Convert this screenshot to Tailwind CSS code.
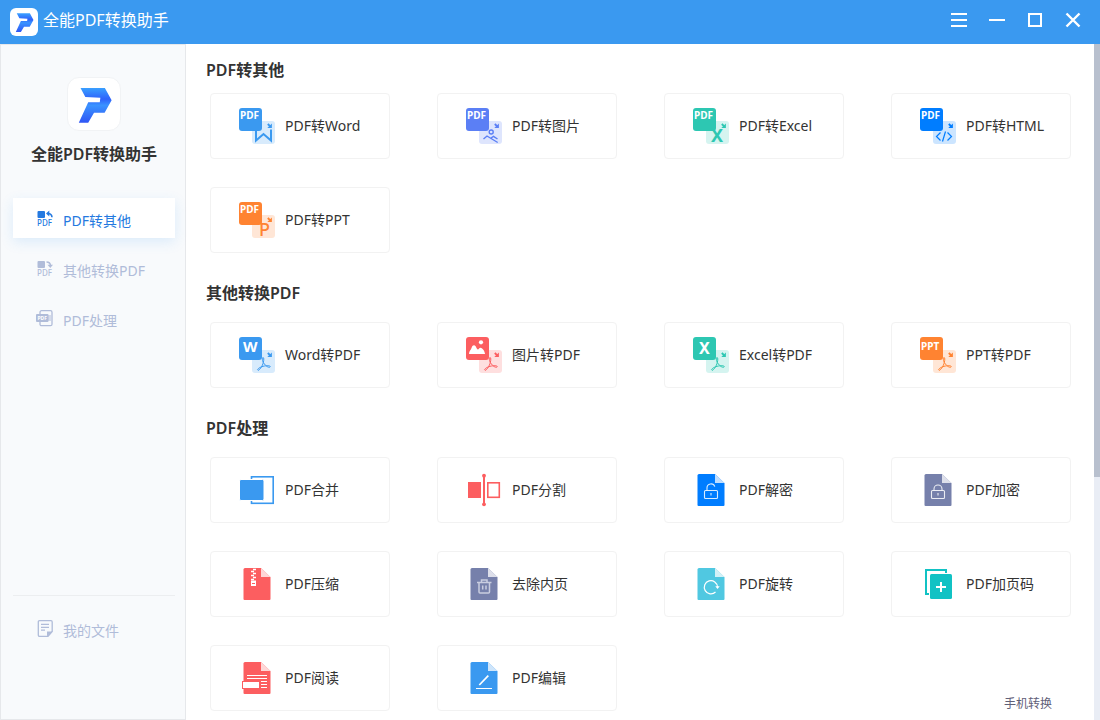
<!DOCTYPE html>
<html lang="zh-CN">
<head>
<meta charset="utf-8">
<meta name="viewport" content="width=device-width, initial-scale=1">
<title>全能PDF转换助手</title>
<script src="https://cdn.jsdelivr.net/npm/@tailwindcss/browser@4"></script>
</head>
<body class="h-screen flex flex-col overflow-hidden bg-white text-[#333] font-['Noto_Sans','Noto_Sans_CJK_SC',sans-serif]">

<!-- Shared icon parts -->
<svg class="absolute size-0" aria-hidden="true">
  <defs>
    <linearGradient id="brand" x1="0" y1="0" x2="0" y2="1">
      <stop offset="0" stop-color="#3aa0ff"/><stop offset=".32" stop-color="#2f62fb"/>
      <stop offset=".5" stop-color="#3a93ff"/><stop offset="1" stop-color="#2f55f5"/>
    </linearGradient>
    <symbol id="logo" viewBox="0 0 54 54">
      <path fill="url(#brand)" d="M13 10.3H38.3L45.3 23 38 36H27L21 46.5H11.2L21 25.3H33L33.6 20.5 18 19.8Z"/>
    </symbol>
    <symbol id="pair" viewBox="0 0 36 36">
      <rect x="13" y="13" width="23" height="23" rx="3" fill="currentColor" opacity=".2"/>
      <path d="M28.800 16l2.500 2.500" stroke="currentColor" stroke-width="1.800"/>
      <path d="M32.900 15.500v4.600h-4.600z" fill="currentColor"/>
      <rect width="23" height="23" rx="3" fill="currentColor"/>
    </symbol>
    <symbol id="acro" viewBox="0 0 36 36">
      <path d="M24.300 25.500C23 22.500 23 20.500 24 20.500C25 20.500 25 22.500 24.300 25.500C23.500 29 20.500 33.500 19 33.300C17.500 32.500 20.500 30.300 24 29.300C27.500 28.500 31.300 28.500 31.300 29.700C31 31 27.500 30.500 24.300 25.500" fill="none" stroke="currentColor" stroke-width="1"/>
    </symbol>
    <symbol id="doc" viewBox="0 0 36 36">
      <path d="M6 2H22L31.500 11V33a1 1 0 0 1-1 1H5.500a1 1 0 0 1-1-1V3.500A1.500 1.500 0 0 1 6 2Z" fill="currentColor"/>
      <path d="M22 1.500H32V11Z" fill="#fff"/>
      <path d="M22 2L31.500 11H22Z" fill="#fff"/>
      <path d="M22 2L31.500 11H22Z" fill="currentColor" opacity=".25"/>
    </symbol>
  </defs>
</svg>

<header class="h-11 shrink-0 flex items-center bg-[#3a99f0] text-white pl-[10px] pr-4">
  <span class="size-7 rounded-md bg-white flex items-center justify-center"><svg class="size-7" aria-hidden="true"><use href="#logo"/></svg></span>
  <span class="ml-[5px] pb-1 text-base leading-6">全能PDF转换助手</span>
  <div class="ml-auto flex gap-4 pb-1">
    <button type="button" aria-label="菜单" class="size-[22px]"><svg class="size-[22px]" viewBox="0 0 22 22" stroke="#fff" stroke-width="2"><path d="M3 5h16M3 11h16M3 17h16"/></svg></button>
    <button type="button" aria-label="最小化" class="size-[22px]"><svg class="size-[22px]" viewBox="0 0 22 22" stroke="#fff" stroke-width="2"><path d="M3 11h16"/></svg></button>
    <button type="button" aria-label="最大化" class="size-[22px]"><svg class="size-[22px]" viewBox="0 0 22 22" stroke="#fff" stroke-width="2" fill="none"><path d="M5 5h12v12H5z"/></svg></button>
    <button type="button" aria-label="关闭" class="size-[22px]"><svg class="size-[22px]" viewBox="0 0 22 22" stroke="#fff" stroke-width="2.400"><path d="M4.500 4.500l13 13M17.500 4.500l-13 13"/></svg></button>
  </div>
</header>

<div class="flex-1 min-h-0 flex">
  <aside class="w-[186px] shrink-0 flex flex-col border border-[#e6e8eb] bg-[#f8fafc] pt-8 pl-3 pr-[10px]">
    <span class="self-center size-[54px] rounded-xl border border-[#f1f3f5] bg-white"><svg class="size-[52px]" aria-hidden="true"><use href="#logo"/></svg></span>
    <h1 class="mt-[11px] text-center text-base leading-6 font-semibold whitespace-nowrap">全能PDF转换助手</h1>
    <nav class="mt-8 flex-1 flex flex-col gap-[10px] text-sm leading-5 text-[#b0bcd9]">
      <button type="button" class="h-10 flex items-center gap-[9px] pl-[23px] bg-white text-[#2479e0] shadow-[0_4px_12px_rgba(58,153,240,0.15)]">
        <svg class="size-[18px]" viewBox="0 0 18 18" aria-hidden="true"><rect x="1.500" y="2" width="7.500" height="7" rx="1" fill="currentColor"/><path d="M12 4.500c2.500 0 3.800 1.200 4 3.800" fill="none" stroke="currentColor" stroke-width="1.600"/><path d="M10 4.500L13.300 1.500V7.500Z" fill="currentColor"/><text x="1" y="17" font-size="8" font-weight="500" fill="currentColor">PDF</text></svg>
        <span class="pt-[6px]">PDF转其他</span>
      </button>
      <button type="button" class="h-10 flex items-center gap-[9px] pl-[23px]">
        <svg class="size-[18px]" viewBox="0 0 18 18" aria-hidden="true"><rect x="1.500" y="2" width="7.500" height="7" rx="1" fill="currentColor"/><path d="M10.500 3c2.500 0 3.800 1 4 3.500" fill="none" stroke="currentColor" stroke-width="1.600"/><path d="M14.300 9L11.500 5.700H17Z" fill="currentColor"/><text x="1" y="17" font-size="8" font-weight="500" fill="currentColor">PDF</text></svg>
        <span class="pt-[6px]">其他转换PDF</span>
      </button>
      <button type="button" class="h-10 flex items-center gap-[9px] pl-[23px]">
        <svg class="size-[18px]" viewBox="0 0 18 18" aria-hidden="true"><rect x="4" y="1.700" width="12" height="15" rx="1.500" fill="none" stroke="currentColor" stroke-width="1.300"/><path d="M12 7h3M12 9h3M12 11h3" stroke="currentColor"/><rect x="0" y="5" width="12.500" height="8" rx="1" fill="currentColor"/><text x="1.500" y="11" font-size="5" font-weight="700" fill="#fff">PDF</text></svg>
        <span class="pt-[6px]">PDF处理</span>
      </button>
    </nav>
    <div class="mb-[71px] border-t border-[#eceef0] pt-3 text-sm leading-5 text-[#b0bcd9]">
      <button type="button" class="w-full h-10 flex items-center gap-[9px] pl-[23px]">
        <svg class="size-[18px]" viewBox="0 0 18 18" aria-hidden="true"><path d="M3.500 1.700h11.500a1.200 1.200 0 0 1 1.200 1.200V12.500L12 17.300H3.500a1.200 1.200 0 0 1-1.200-1.200V2.900a1.200 1.200 0 0 1 1.200-1.200Z" fill="none" stroke="currentColor" stroke-width="1.300"/><path d="M5 5.300h8M5 8.300h8M5 11.200h4" stroke="currentColor" stroke-width="1.200"/><path d="M11 17.500V12.500h5.700Z" fill="currentColor"/></svg>
        <span class="pt-[6px]">我的文件</span>
      </button>
    </div>
  </aside>

  <main class="relative flex-1 min-w-0 overflow-hidden pt-[14px] text-sm leading-5">
    <section>
      <h2 class="pl-5 text-base leading-6 font-semibold">PDF转其他</h2>
      <div class="mt-[11px] pl-6 pr-[23px] grid grid-cols-4 gap-x-[47px] gap-y-7">
        <button type="button" class="h-[66px] flex items-center gap-[10px] pl-7 rounded border border-[#f2f2f2] bg-white whitespace-nowrap">
          <svg class="size-9 shrink-0 overflow-visible text-[#3a99f0]" viewBox="0 0 36 36" aria-hidden="true"><use href="#pair"/><text x="1" y="11" font-size="10" font-weight="700" fill="#fff">PDF</text><path d="M17 23V32.500L24.500 26L32 32.500V21.500" fill="none" stroke="currentColor" stroke-width="2"/></svg>
          <span>PDF转Word</span>
        </button>
        <button type="button" class="h-[66px] flex items-center gap-[10px] pl-7 rounded border border-[#f2f2f2] bg-white whitespace-nowrap">
          <svg class="size-9 shrink-0 overflow-visible text-[#5b7ff5]" viewBox="0 0 36 36" aria-hidden="true"><use href="#pair"/><text x="1" y="11" font-size="10" font-weight="700" fill="#fff">PDF</text><g fill="none" stroke="currentColor" stroke-width="1.400"><circle cx="25.200" cy="24" r="2"/><path d="M17.500 31l3.500-3 10.700 6.500M25 30l2.500-1.700 4 2.700"/></g></svg>
          <span>PDF转图片</span>
        </button>
        <button type="button" class="h-[66px] flex items-center gap-[10px] pl-7 rounded border border-[#f2f2f2] bg-white whitespace-nowrap">
          <svg class="size-9 shrink-0 overflow-visible text-[#2dc7b2]" viewBox="0 0 36 36" aria-hidden="true"><use href="#pair"/><text x="1" y="11" font-size="10" font-weight="700" fill="#fff">PDF</text><text x="18" y="34" font-size="18" font-weight="700" fill="currentColor">X</text></svg>
          <span>PDF转Excel</span>
        </button>
        <button type="button" class="h-[66px] flex items-center gap-[10px] pl-7 rounded border border-[#f2f2f2] bg-white whitespace-nowrap">
          <svg class="size-9 shrink-0 overflow-visible text-[#007dff]" viewBox="0 0 36 36" aria-hidden="true"><use href="#pair"/><text x="1" y="11" font-size="10" font-weight="700" fill="#fff">PDF</text><path d="M20.500 24.500l-4 4 4 4M27.500 24.500l4 4-4 4M25.500 23.500l-3 10" fill="none" stroke="currentColor" stroke-width="1.200"/></svg>
          <span>PDF转HTML</span>
        </button>
        <button type="button" class="h-[66px] flex items-center gap-[10px] pl-7 rounded border border-[#f2f2f2] bg-white whitespace-nowrap">
          <svg class="size-9 shrink-0 overflow-visible text-[#ff8331]" viewBox="0 0 36 36" aria-hidden="true"><use href="#pair"/><text x="1" y="11" font-size="10" font-weight="700" fill="#fff">PDF</text><text x="20" y="34" font-size="18" font-weight="500" fill="currentColor">P</text></svg>
          <span>PDF转PPT</span>
        </button>
      </div>
    </section>

    <section class="mt-7">
      <h2 class="pl-5 text-base leading-6 font-semibold">其他转换PDF</h2>
      <div class="mt-[17px] pl-6 pr-[23px] grid grid-cols-4 gap-x-[47px] gap-y-7">
        <button type="button" class="h-[66px] flex items-center gap-[10px] pl-7 rounded border border-[#f2f2f2] bg-white whitespace-nowrap">
          <svg class="size-9 shrink-0 text-[#3a99f0]" viewBox="0 0 36 36" aria-hidden="true"><use href="#pair"/><use href="#acro"/><text x="4" y="15" font-size="15" font-weight="700" fill="#fff">W</text></svg>
          <span>Word转PDF</span>
        </button>
        <button type="button" class="h-[66px] flex items-center gap-[10px] pl-7 rounded border border-[#f2f2f2] bg-white whitespace-nowrap">
          <svg class="size-9 shrink-0 text-[#fc5e60]" viewBox="0 0 36 36" aria-hidden="true"><use href="#pair"/><use href="#acro"/><path d="M3 17c0-3 2-4 2.700-6.500C6.500 8 8.500 7.500 9.800 9.500c.7 1.200 1 2.800 2 3 1.200 0 1.400-1.700 2.700-1.700 2.200 0 4.500 4.200 4.500 6.200Z" fill="#fff"/><circle cx="15" cy="5.300" r="2.100" fill="#fff"/></svg>
          <span>图片转PDF</span>
        </button>
        <button type="button" class="h-[66px] flex items-center gap-[10px] pl-7 rounded border border-[#f2f2f2] bg-white whitespace-nowrap">
          <svg class="size-9 shrink-0 text-[#2dc7b2]" viewBox="0 0 36 36" aria-hidden="true"><use href="#pair"/><use href="#acro"/><text x="6" y="17" font-size="16" font-weight="700" fill="#fff">X</text></svg>
          <span>Excel转PDF</span>
        </button>
        <button type="button" class="h-[66px] flex items-center gap-[10px] pl-7 rounded border border-[#f2f2f2] bg-white whitespace-nowrap">
          <svg class="size-9 shrink-0 text-[#ff8331]" viewBox="0 0 36 36" aria-hidden="true"><use href="#pair"/><use href="#acro"/><text x="1" y="13" font-size="10" font-weight="700" fill="#fff">PPT</text></svg>
          <span>PPT转PDF</span>
        </button>
      </div>
    </section>

    <section class="mt-7">
      <h2 class="pl-5 text-base leading-6 font-semibold">PDF处理</h2>
      <div class="mt-[17px] pl-6 pr-[23px] grid grid-cols-4 gap-x-[47px] gap-y-7">
        <button type="button" class="h-[66px] flex items-center gap-[10px] pl-7 rounded border border-[#f2f2f2] bg-white whitespace-nowrap">
          <svg class="size-9 shrink-0 text-[#3a99f0]" viewBox="0 0 36 36" aria-hidden="true"><rect x="12.500" y="4.800" width="21.700" height="26.500" fill="none" stroke="currentColor" stroke-width="1.600"/><rect x=".5" y="7.500" width="24.500" height="21" rx="1.500" fill="currentColor" stroke="#fff" stroke-width="1"/></svg>
          <span>PDF合并</span>
        </button>
        <button type="button" class="h-[66px] flex items-center gap-[10px] pl-7 rounded border border-[#f2f2f2] bg-white whitespace-nowrap">
          <svg class="size-9 shrink-0 text-[#fc5e60]" viewBox="0 0 36 36" aria-hidden="true"><g fill="currentColor"><rect x="2" y="10" width="13" height="16"/><rect x="17" y="3" width="2" height="30"/><circle cx="18" cy="3.700" r="1.900"/><circle cx="18" cy="32.300" r="1.900"/></g><rect x="21.800" y="10.800" width="11.500" height="14.500" fill="none" stroke="currentColor" stroke-width="1.600"/></svg>
          <span>PDF分割</span>
        </button>
        <button type="button" class="h-[66px] flex items-center gap-[10px] pl-7 rounded border border-[#f2f2f2] bg-white whitespace-nowrap">
          <svg class="size-9 shrink-0 text-[#007dff]" viewBox="0 0 36 36" aria-hidden="true"><use href="#doc"/><g fill="none" stroke="#fff" stroke-opacity=".85" stroke-width="1.100"><rect x="11.500" y="18.500" width="13" height="8" rx="1"/><path d="M14 18.500V16a4 4 0 0 1 7.800-1.300M18 21v2.500"/></g></svg>
          <span>PDF解密</span>
        </button>
        <button type="button" class="h-[66px] flex items-center gap-[10px] pl-7 rounded border border-[#f2f2f2] bg-white whitespace-nowrap">
          <svg class="size-9 shrink-0 text-[#7680ab]" viewBox="0 0 36 36" aria-hidden="true"><use href="#doc"/><g fill="none" stroke="#fff" stroke-opacity=".85" stroke-width="1.100"><rect x="11.500" y="18.500" width="13" height="8" rx="1"/><path d="M14 18.500V17a4 4 0 0 1 8 0V18.500M18 21v2.500"/></g></svg>
          <span>PDF加密</span>
        </button>
        <button type="button" class="h-[66px] flex items-center gap-[10px] pl-7 rounded border border-[#f2f2f2] bg-white whitespace-nowrap">
          <svg class="size-9 shrink-0 text-[#fc5e60]" viewBox="0 0 36 36" aria-hidden="true"><use href="#doc"/><path d="M14 3.500h3M12 5.500h3M14 7.500h3M12 9.500h3M14 11.500h3M12 13.500h3" stroke="#fff" stroke-width="1.400"/><path d="M12 14.500h5v5.500h-5z" fill="#fff"/><path d="M13 17.500h3" stroke="currentColor"/></svg>
          <span>PDF压缩</span>
        </button>
        <button type="button" class="h-[66px] flex items-center gap-[10px] pl-7 rounded border border-[#f2f2f2] bg-white whitespace-nowrap">
          <svg class="size-9 shrink-0 text-[#7680ab]" viewBox="0 0 36 36" aria-hidden="true"><use href="#doc"/><g fill="none" stroke="#c9cde0" stroke-width="1.500"><path d="M11 16.500h14.500M15.500 16V14h5.500v2M13 16.500V26a1 1 0 0 0 1 1h8.500a1 1 0 0 0 1-1v-9.500M16.700 19.500v4M20 19.500v4"/></g></svg>
          <span>去除内页</span>
        </button>
        <button type="button" class="h-[66px] flex items-center gap-[10px] pl-7 rounded border border-[#f2f2f2] bg-white whitespace-nowrap">
          <svg class="size-9 shrink-0 text-[#50c8e1]" viewBox="0 0 36 36" aria-hidden="true"><use href="#doc"/><path d="M22.500 26a6.600 6.600 0 1 1 2-5" fill="none" stroke="#fff" stroke-width="1.200"/><path d="M22.300 20.300h4.400l-2.200 2.700z" fill="#fff"/></svg>
          <span>PDF旋转</span>
        </button>
        <button type="button" class="h-[66px] flex items-center gap-[10px] pl-7 rounded border border-[#f2f2f2] bg-white whitespace-nowrap">
          <svg class="size-9 shrink-0 text-[#11c2c4]" viewBox="0 0 36 36" aria-hidden="true"><path d="M6 4h20v24H6z" fill="none" stroke="currentColor" stroke-width="2"/><rect x="9" y="7" width="24" height="27" rx="1.500" fill="#fff"/><rect x="10" y="8" width="22" height="25" rx="1.500" fill="currentColor"/><path d="M16 21h10M21 16v10" stroke="#fff" stroke-width="2"/></svg>
          <span>PDF加页码</span>
        </button>
        <button type="button" class="h-[66px] flex items-center gap-[10px] pl-7 rounded border border-[#f2f2f2] bg-white whitespace-nowrap">
          <svg class="size-9 shrink-0 text-[#fc5e60]" viewBox="0 0 36 36" aria-hidden="true"><use href="#doc"/><path d="M8 15.500h20M8 18.500h20M22 21.500h6M22 24.500h6M22 27.500h6" stroke="#fff"/><rect x="3.500" y="21.500" width="17" height="7" fill="#fff" stroke="currentColor"/></svg>
          <span>PDF阅读</span>
        </button>
        <button type="button" class="h-[66px] flex items-center gap-[10px] pl-7 rounded border border-[#f2f2f2] bg-white whitespace-nowrap">
          <svg class="size-9 shrink-0 text-[#3a99f0]" viewBox="0 0 36 36" aria-hidden="true"><use href="#doc"/><path d="M13.300 25l9-9.300" stroke="#fff" stroke-width="1.700"/><path d="M10 28.500h16" stroke="#fff"/></svg>
          <span>PDF编辑</span>
        </button>
      </div>
    </section>

    <a href="#" class="absolute right-[42px] bottom-[6px] text-xs leading-5 text-[#5f6078]">手机转换</a>
  </main>

  <div class="w-[6px] shrink-0 bg-[#e9edf5]" aria-hidden="true"><div class="h-[64%] bg-[#b8c0ce]"></div></div>
</div>
</body>
</html>
